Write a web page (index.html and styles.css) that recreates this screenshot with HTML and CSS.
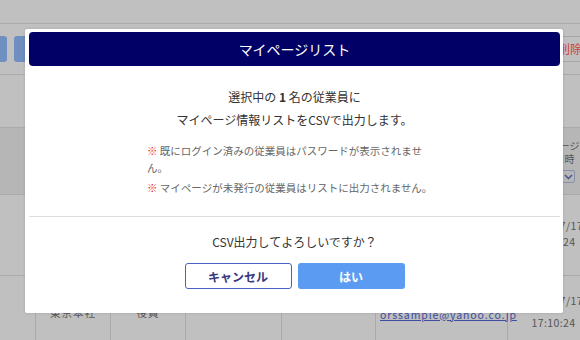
FILE: index.html
```html
<!DOCTYPE html>
<html lang="ja">
<head>
<meta charset="utf-8">
<title>マイページリスト</title>
<link rel="stylesheet" href="styles.css">
</head>
<body>
<div class="page">
  <div class="topbar"></div>
  <div class="toolbar">
    <div class="tb-left">
      <span class="btn-blue b1"></span>
      <span class="btn-blue b2"></span>
    </div>
    <span class="btn-del">削除</span>
  </div>
  <div class="spacer-row"></div>
  <div class="grid head">
    <div class="cell"></div>
    <div class="cell"></div>
    <div class="cell"></div>
    <div class="cell"></div>
    <div class="cell"></div>
    <div class="cell"></div>
    <div class="cell date-head">
      <span>マイページ</span>
      <span>発行日時</span>
      <span class="sel"><svg width="9" height="6" viewBox="0 0 9 6"><path d="M1 1 L4.5 4.5 L8 1" fill="none" stroke="#44508a" stroke-width="1.4"/></svg></span>
    </div>
  </div>
  <div class="grid row1">
    <div class="cell"></div>
    <div class="cell"></div>
    <div class="cell"></div>
    <div class="cell"></div>
    <div class="cell"></div>
    <div class="cell"></div>
    <div class="cell date d1"><span>2023/07/17</span><span>17:10:24</span></div>
  </div>
  <div class="grid row2">
    <div class="cell"></div>
    <div class="cell txt">東京本社</div>
    <div class="cell txt">役員</div>
    <div class="cell"></div>
    <div class="cell"></div>
    <div class="cell mail"><a href="#">orssample@yahoo.co.jp</a></div>
    <div class="cell date d2"><span>2023/07/17</span><span>17:10:24</span></div>
  </div>
</div>

<div class="modal">
  <div class="modal-title">マイページリスト</div>
  <div class="modal-body">
    <p class="lead">選択中の <b>1</b> 名の従業員に<br>マイページ情報リストをCSVで出力します。</p>
    <div class="notes">
      <p><span class="mark">※</span> 既にログイン済みの従業員はパスワードが表示されません。</p>
      <p><span class="mark">※</span> マイページが未発行の従業員はリストに出力されません。</p>
    </div>
  </div>
  <div class="modal-foot">
    <p class="question">CSV出力してよろしいですか？</p>
    <div class="actions">
      <button class="btn cancel">キャンセル</button>
      <button class="btn ok">はい</button>
    </div>
  </div>
</div>
</body>
</html>
```

FILE: styles.css
```css
* { box-sizing: border-box; }
html, body {
  margin: 0;
  padding: 0;
  width: 580px;
  height: 340px;
  overflow: hidden;
  background: #c0c0c0;
  font-family: "Noto Sans CJK JP", "Noto Sans", sans-serif;
}
.page {
  position: relative;
  width: 580px;
  height: 340px;
}
.topbar {
  height: 24px;
  border-bottom: 1px solid #aaaaaa;
}
.toolbar {
  height: 51px;
  border-bottom: 1px solid #aaaaaa;
  display: flex;
  justify-content: space-between;
  align-items: flex-start;
  padding-top: 12px;
}
.tb-left { display: flex; gap: 7px; }
.btn-blue {
  display: block;
  height: 26px;
  background: #6e8fbf;
  border-radius: 3px;
}
.b1 { width: 30px; margin-left: -23px; }
.b2 { width: 40px; }
.btn-del {
  display: block;
  width: 44px;
  height: 26px;
  margin-right: -15px;
  border: 1px solid #a6a6a6;
  border-radius: 2px;
  color: #cf3c3c;
  font-size: 12px;
  line-height: 24px;
  padding-left: 6px;
  white-space: nowrap;
}
.spacer-row {
  height: 53px;
  border-bottom: 1px solid #aaaaaa;
}
.grid {
  display: grid;
  grid-template-columns: 36px 75px 75px 96px 94px 132px 92px;
  border-bottom: 1px solid #aaaaaa;
  width: 600px;
}
.cell {
  border-right: 1px solid #aaaaaa;
  display: flex;
  align-items: center;
  justify-content: center;
  font-size: 10.5px;
  color: #555;
}
.head { height: 67px; background: #b6b6b6; }
.row1 { height: 81px; }
.row2 { height: 70px; border-bottom: none; }
.date-head {
  flex-direction: column;
  justify-content: flex-start;
  padding-top: 11px;
  line-height: 13px;
  font-size: 10px;
  color: #555;
  padding-left: 2px;
}
.sel {
  display: flex;
  align-items: center;
  justify-content: flex-end;
  width: 42px;
  height: 13px;
  margin-top: 5px;
  margin-left: -2px;
  border: 1px solid #8890aa;
  border-radius: 2px;
  padding-right: 1px;
}
.date {
  flex-direction: column;
  font-size: 10.5px;
  color: #555;
  letter-spacing: 0.4px;
}
.d1 { line-height: 16px; margin-top: -3px; }
.d2 { line-height: 22px; padding-top: 2px; }
.txt { padding-top: 3px; letter-spacing: 1px; }
.mail { justify-content: flex-start; padding-left: 4px; padding-top: 6px; }
.mail a {
  color: #3d4ea0;
  font-size: 10.5px;
  letter-spacing: 0.9px;
  text-decoration: underline;
}

.modal {
  position: absolute;
  left: 25px;
  top: 29px;
  width: 538px;
  height: 284px;
  background: #ffffff;
  border-radius: 2px;
  box-shadow: 0 0 3px rgba(0,0,0,0.15);
  padding: 3px 3px 0 4px;
}
.modal-title {
  height: 34px;
  background: #000066;
  border-radius: 4px;
  color: #ffffff;
  font-size: 14px;
  line-height: 34px;
  text-align: center;
}
.modal-body {
  padding-top: 19px;
  border-bottom: 1px solid #dddddd;
  padding-bottom: 20px;
}
.lead {
  margin: 0;
  text-align: center;
  font-size: 12px;
  line-height: 23px;
  color: #333333;
}
.lead b { font-weight: bold; }
.notes {
  width: 290px;
  margin: 11px 0 0 118px;
  font-size: 10.5px;
  line-height: 17px;
  color: #666666;
}
.notes p { margin: 0 0 3px 0; }
.notes p:last-child { margin-bottom: 0; }
.mark { color: #f02828; font-weight: bold; }
.modal-foot {
  padding-top: 15px;
  text-align: center;
}
.question {
  margin: 0;
  font-size: 12px;
  line-height: 20px;
  color: #333333;
}
.actions {
  display: flex;
  justify-content: center;
  gap: 6px;
  margin-top: 11px;
}
.btn {
  width: 107px;
  height: 26px;
  border-radius: 3px;
  font-family: "Noto Sans CJK JP", sans-serif;
  font-size: 12px;
  font-weight: bold;
  padding: 0;
  cursor: pointer;
}
.cancel {
  background: #ffffff;
  border: 1.5px solid #4a63c2;
  color: #383880;
}
.ok {
  background: #5b9cf2;
  border: none;
  color: #ffffff;
}
```
